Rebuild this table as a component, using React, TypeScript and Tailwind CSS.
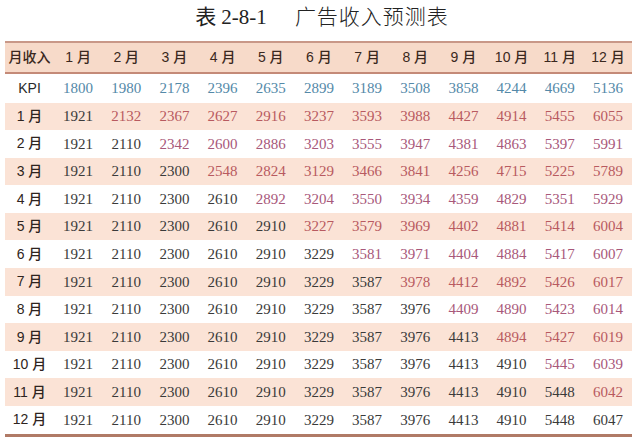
import React from "react";

const months = ["1 月","2 月","3 月","4 月","5 月","6 月","7 月","8 月","9 月","10 月","11 月","12 月"];
const kpi = [1800,1980,2178,2396,2635,2899,3189,3508,3858,4244,4669,5136];
const rows: number[][] = [
  [1921,2132,2367,2627,2916,3237,3593,3988,4427,4914,5455,6055],
  [1921,2110,2342,2600,2886,3203,3555,3947,4381,4863,5397,5991],
  [1921,2110,2300,2548,2824,3129,3466,3841,4256,4715,5225,5789],
  [1921,2110,2300,2610,2892,3204,3550,3934,4359,4829,5351,5929],
  [1921,2110,2300,2610,2910,3227,3579,3969,4402,4881,5414,6004],
  [1921,2110,2300,2610,2910,3229,3581,3971,4404,4884,5417,6007],
  [1921,2110,2300,2610,2910,3229,3587,3978,4412,4892,5426,6017],
  [1921,2110,2300,2610,2910,3229,3587,3976,4409,4890,5423,6014],
  [1921,2110,2300,2610,2910,3229,3587,3976,4413,4894,5427,6019],
  [1921,2110,2300,2610,2910,3229,3587,3976,4413,4910,5445,6039],
  [1921,2110,2300,2610,2910,3229,3587,3976,4413,4910,5448,6042],
  [1921,2110,2300,2610,2910,3229,3587,3976,4413,4910,5448,6047],
];

const sans = { fontFamily: '"Liberation Sans", "Noto Sans CJK SC", sans-serif' };
const serif = { fontFamily: '"Liberation Serif", "Noto Sans CJK SC", serif' };

export default function App() {
  return (
    <div className="w-[640px] h-[441px] bg-white overflow-hidden relative">
      <div className="h-[41px] flex items-center justify-center text-[21px] text-[#222] pb-[6px]" style={serif}>
        <span className="ml-[4px]">表 2-8-1</span>
        <span className="ml-[28px] tracking-[1px] font-light">广告收入预测表</span>
      </div>
      <div className="ml-[5px] w-[627px]">
        <div className="h-[33px] grid grid-cols-[49px_repeat(12,1fr)] items-center bg-[#f7dac9] border-t-2 border-t-[#c99888] border-b-2 border-b-[#c48a78] text-[14px] text-[#3a2820] font-medium" style={sans}>
          <div className="text-center">月收入</div>
          {months.map((m) => (
            <div key={m} className="text-center">{m}</div>
          ))}
        </div>
        <div className="h-[28.5px] grid grid-cols-[49px_repeat(12,1fr)] items-center bg-white">
          <div className="text-center text-[14px] text-[#2a2a2a]" style={sans}>KPI</div>
          {kpi.map((v, i) => (
            <div key={i} className="text-center text-[15px] text-[#5489a8]" style={serif}>{v}</div>
          ))}
        </div>
        {rows.map((r, ri) => {
          const pink = ri % 2 === 0;
          return (
            <div key={ri} className={`h-[27.6px] grid grid-cols-[49px_repeat(12,1fr)] items-center ${pink ? "bg-[#fbe3d6]" : "bg-white"}`}>
              <div className="text-center text-[14px] text-[#2e2420] font-medium" style={sans}>{months[ri]}</div>
              {r.map((v, ci) => {
                const red = ci > ri;
                return (
                  <div
                    key={ci}
                    className={`text-center text-[15px] ${red ? (pink ? "text-[#b85a60]" : "text-[#a8587a]") : "text-[#3a3a3a]"}`}
                    style={serif}
                  >
                    {v}
                  </div>
                );
              })}
            </div>
          );
        })}
        <div className="h-[3px] bg-[#b07a66]"></div>
      </div>
    </div>
  );
}
